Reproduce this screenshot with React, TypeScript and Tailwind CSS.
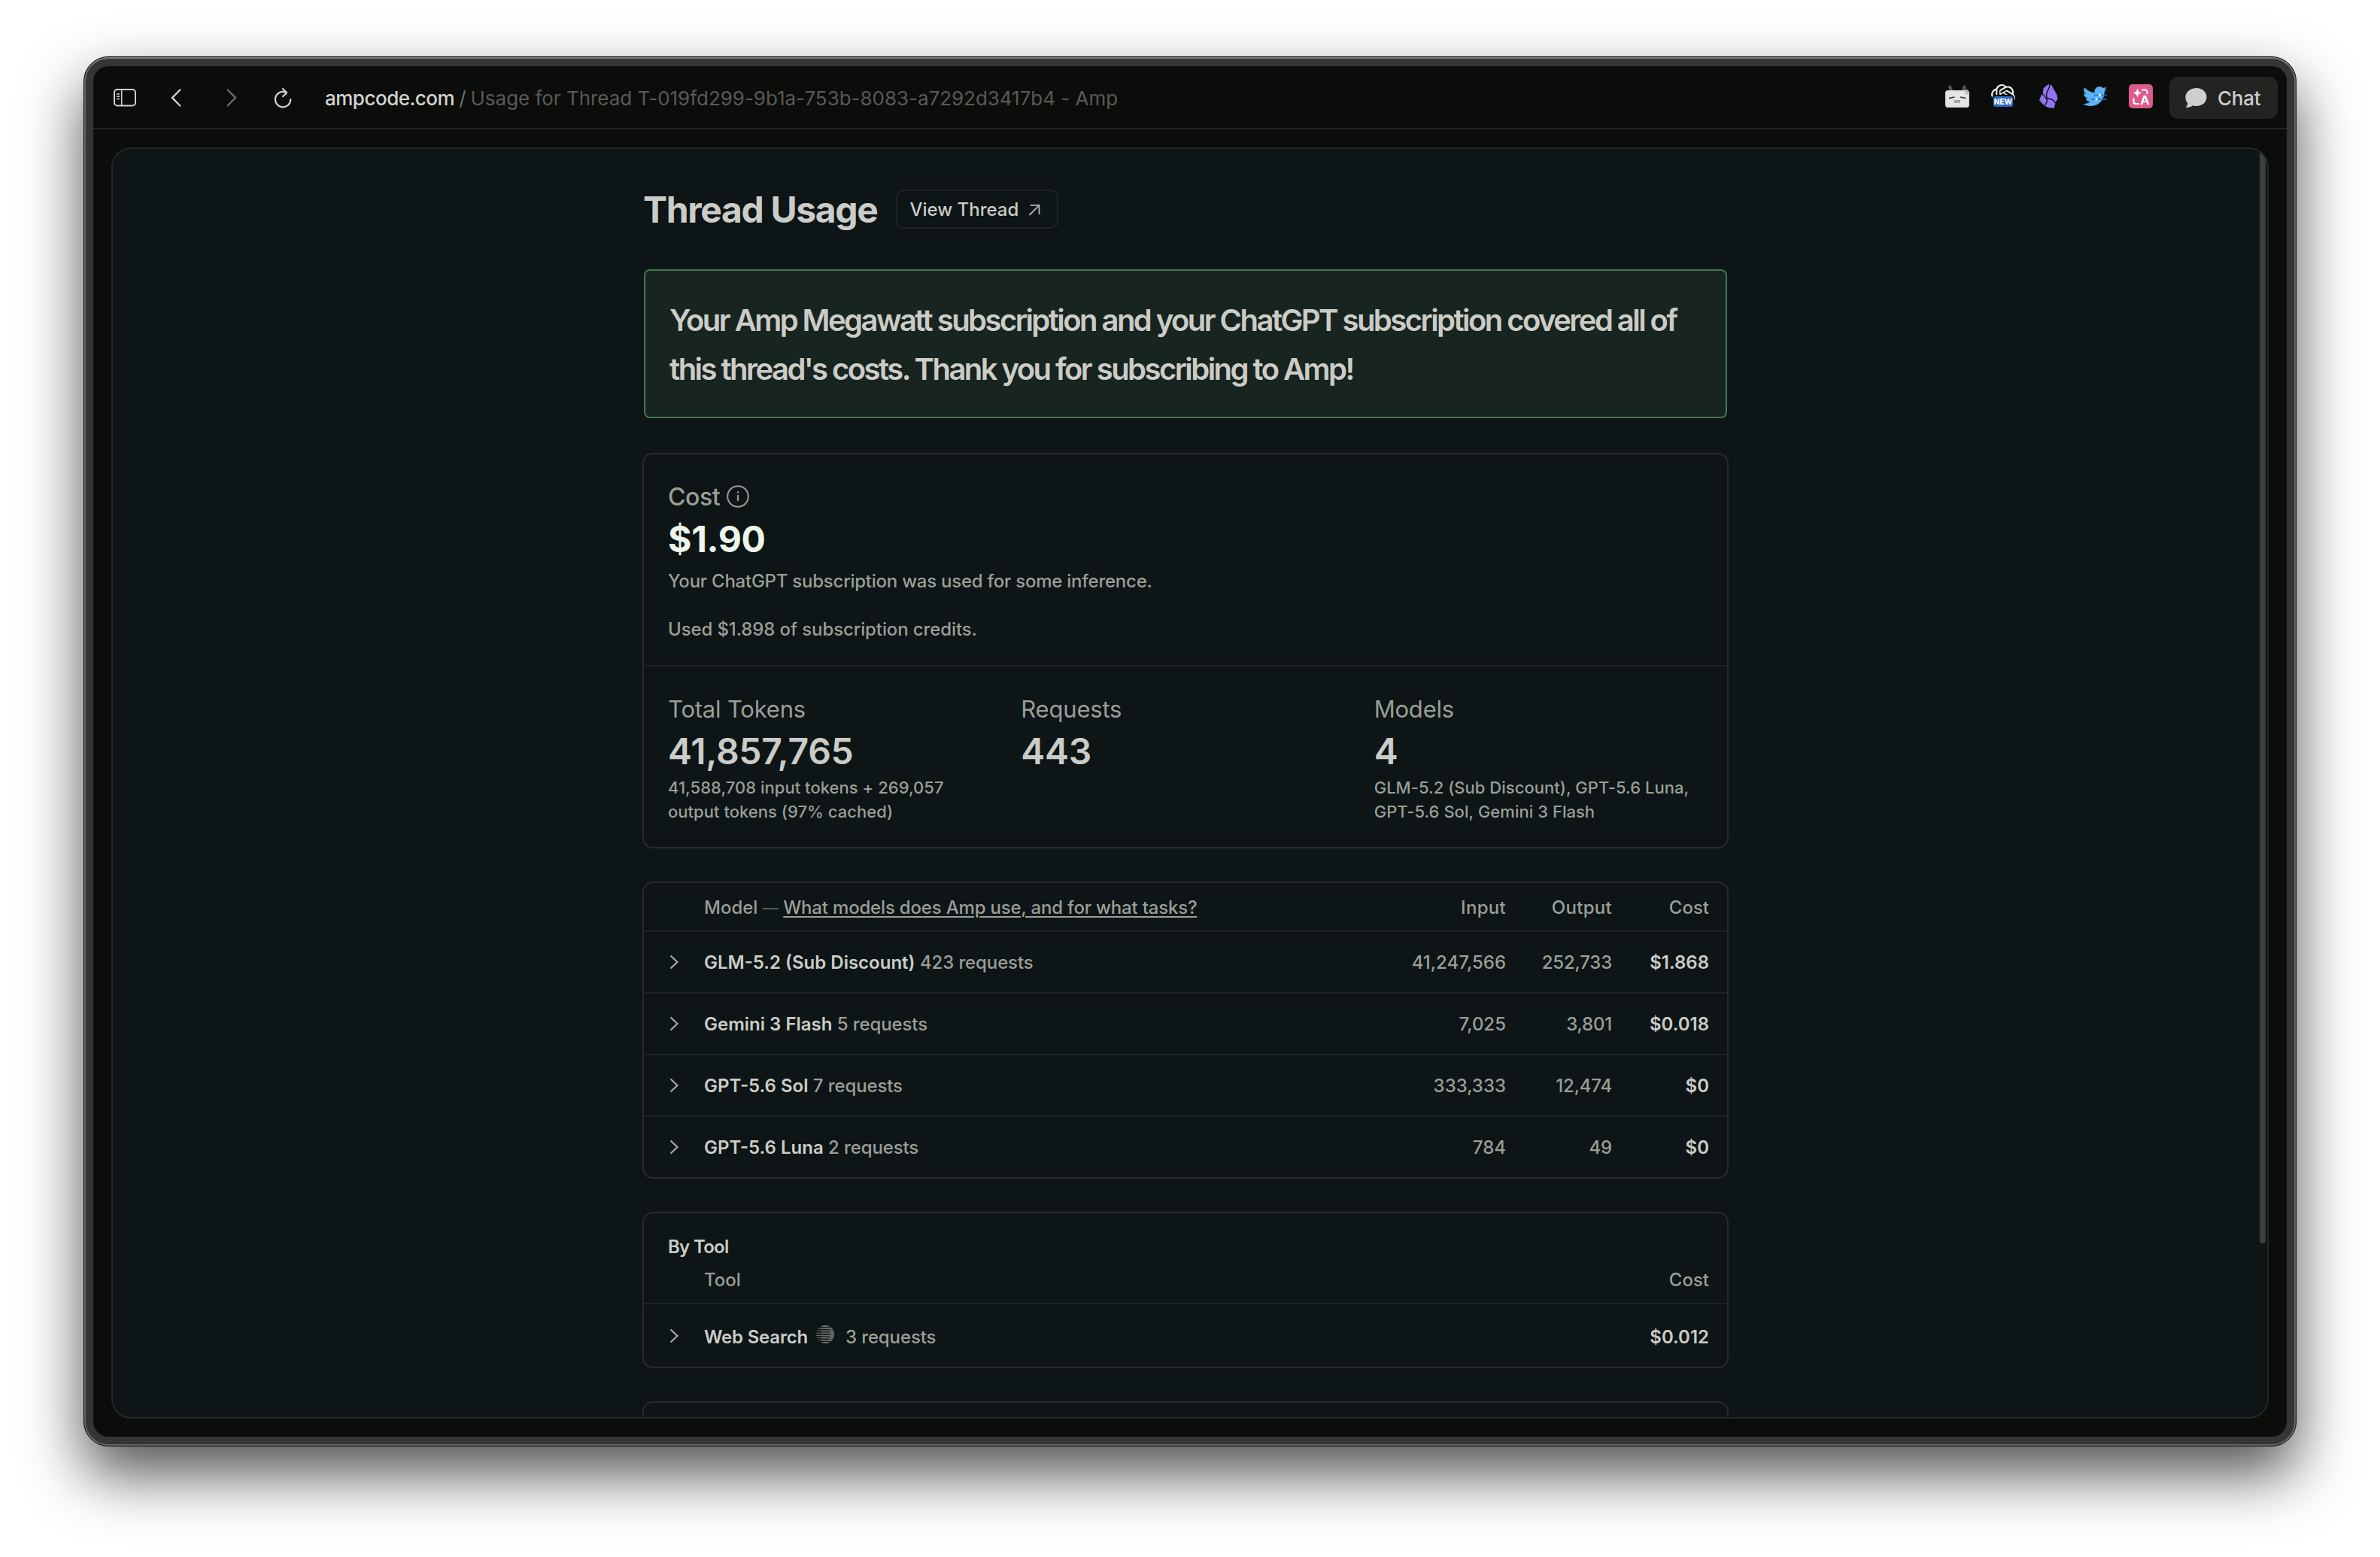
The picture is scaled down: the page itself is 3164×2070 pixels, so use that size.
import type { ReactNode } from 'react'
import { FaTwitter } from 'react-icons/fa'
import { SiOpenai } from 'react-icons/si'

const MODELS = [
  { name: 'GLM-5.2 (Sub Discount)', requests: 423, input: '41,247,566', output: '252,733', cost: '$1.868' },
  { name: 'Gemini 3 Flash', requests: 5, input: '7,025', output: '3,801', cost: '$0.018' },
  { name: 'GPT-5.6 Sol', requests: 7, input: '333,333', output: '12,474', cost: '$0' },
  { name: 'GPT-5.6 Luna', requests: 2, input: '784', output: '49', cost: '$0' },
]

const STATS = [
  { label: 'Total Tokens', value: '41,857,765', lines: ['41,588,708 input tokens + 269,057', 'output tokens (97% cached)'] },
  { label: 'Requests', value: '443', lines: [] },
  { label: 'Models', value: '4', lines: ['GLM-5.2 (Sub Discount), GPT-5.6 Luna,', 'GPT-5.6 Sol, Gemini 3 Flash'] },
]

function SidebarIcon() {
  return (
    <svg className="h-8 w-8" viewBox="0 0 32 32" fill="none" stroke="#d0d1cd" strokeWidth="2" aria-hidden>
      <rect x="2" y="5" width="28" height="21.5" rx="4" />
      <path d="M11.7 5v21.5" strokeWidth="1.6" />
      <path d="M5 11h4M5 14.2h4M5 17.4h4" strokeWidth="1.5" />
    </svg>
  )
}

function BackIcon() {
  return (
    <svg className="h-8 w-8" viewBox="0 0 32 32" fill="none" stroke="#d0d1cd" strokeWidth="2.4" aria-hidden>
      <path d="M21.3 5.5 11 16l10.3 10.5" strokeLinecap="round" />
    </svg>
  )
}

function ForwardIcon() {
  return (
    <svg className="h-8 w-8" viewBox="0 0 32 32" fill="none" stroke="#6c6d6a" strokeWidth="2.4" aria-hidden>
      <path d="M10.7 5.5 21 16 10.7 26.5" strokeLinecap="round" />
    </svg>
  )
}

function ReloadIcon() {
  return (
    <svg className="h-8 w-8" viewBox="0 0 32 32" fill="none" stroke="#d0d1cd" strokeWidth="2.2" aria-hidden>
      <path d="M19.5 8.6A10.2 10.2 0 1 0 26.3 18" strokeLinecap="round" />
      <path d="M16 4l5.2 5.3L16 14.2" strokeLinecap="round" strokeLinejoin="round" />
    </svg>
  )
}

function RobotIcon() {
  return (
    <svg className="h-8 w-8" viewBox="0 0 32 32" aria-hidden>
      <path d="M6.3 3.5 8 8.5M25.7 3.5 24 8.5" stroke="#555654" strokeWidth="4" strokeLinecap="round" />
      <rect x="0" y="8" width="32" height="23" rx="3.5" fill="#d4d4d4" />
      <rect x="1.5" y="9.5" width="29" height="20" rx="2.5" fill="#e6e6e6" />
      <path d="M5 18.6l7.5-1.6M19.8 17l7.5 1.6" stroke="#3a3a3a" strokeWidth="1.6" />
      <rect x="12.3" y="21.3" width="7.4" height="3" fill="#a9a9a9" stroke="#8c8c8c" strokeWidth="0.6" />
      <path d="M28 6c-1.2 2.4-2 3.6-2 5a2.7 2.7 0 0 0 5.4 0C31.4 9.6 29.6 8 28 6z" fill="#bdbdbd" />
    </svg>
  )
}

function ObsidianIcon() {
  return (
    <svg className="h-8 w-8" viewBox="0 0 96 96" aria-hidden>
      <path d="M50 0l9 5 7 14 12 20 5 18-9 16-6 23-22-3-16-7L9 64l9-23 5-3 3-22 16-14z" fill="#9273f0" />
      <path
        d="M50 0c4 16-12 24-12 40l2 20c2 10-4 16-9 26M19 36c6 6 14 12 19 23M38 59c18-4 26 2 37 16"
        fill="none"
        stroke="#0b0d0a"
        strokeWidth="4"
      />
    </svg>
  )
}

function TranslateIcon() {
  return (
    <svg className="h-8 w-8" viewBox="0 0 32 32" aria-hidden>
      <rect width="32" height="32" rx="5" fill="#de5a8e" />
      <path d="M11.5 5c1 4.4 1.8 5.4 6 6.5-4.2 1.1-5 2.1-6 6.5-1-4.4-1.8-5.4-6-6.5 4.2-1.1 5-2.1 6-6.5z" fill="#fff" />
      <path d="M17 7.5h4.5a3 3 0 0 1 3 3V13M6.5 18.5V23a3 3 0 0 0 3 3H14" fill="none" stroke="#fff" strokeWidth="2.1" />
      <text x="21.5" y="27" textAnchor="middle" fontSize="16.5" fontWeight="700" fill="#fff">
        A
      </text>
    </svg>
  )
}

function ChatBubbleIcon() {
  return (
    <svg className="h-7 w-[29px]" viewBox="0 0 29 28" fill="#cececc" aria-hidden>
      <path d="M15 1C22.7 1 28.5 6 28.5 13S22.7 25 15 25c-2 0-3.6-.3-5-.8C8 26 5 27 1.6 27c-.6 0-.7-.6-.3-1 1.5-1.5 2-3.3 1.9-4.7C1.3 19 .4 16.2.4 13 .4 6 7.3 1 15 1z" />
    </svg>
  )
}

function InfoIcon() {
  return (
    <svg className="h-8 w-8" viewBox="0 0 32 32" fill="none" stroke="#9a9f98" strokeWidth="2" aria-hidden>
      <circle cx="16" cy="16" r="13.8" />
      <path d="M16 14v8" strokeWidth="2.2" />
      <circle cx="16" cy="10.5" r="1.3" fill="#9a9f98" stroke="none" />
    </svg>
  )
}

function ArrowUpRightIcon() {
  return (
    <svg className="h-4 w-4" viewBox="0 0 16 16" fill="none" stroke="#b4b7b0" strokeWidth="1.8" aria-hidden>
      <path d="M2.5 1.9h12v12M14.3 2.1 1.4 15" />
    </svg>
  )
}

function ChevronIcon() {
  return (
    <svg className="h-6 w-6" viewBox="0 0 24 24" fill="none" stroke="#a8ada6" strokeWidth="2.1" aria-hidden>
      <path d="M7.5 3.5 16.5 12l-9 8.5" />
    </svg>
  )
}

/** Striped globe shown next to tools that run through a search provider. */
function GlobeStripesIcon() {
  return (
    <svg className="h-6 w-6" viewBox="0 0 24 24" aria-hidden>
      <clipPath id="globe">
        <circle cx="12" cy="12" r="12" />
      </clipPath>
      <g clipPath="url(#globe)" stroke="#7b817c">
        <path d="M0 1h24M0 4.2h24M0 7.3h24M0 10.4h24M0 13.6h24M0 16.7h24M0 19.8h24M0 23h24" strokeWidth="0.9" />
        <path
          d="M8 1h16M7 4.2h17M7 7.3h17M7 10.4h17M7 13.6h17M7 16.7h17M7 19.8h17M8 23h16"
          stroke="#666c68"
          strokeWidth="1.8"
        />
        <path d="M17 4.2h7M18 7.3h6M18.5 10.4h6M18.5 13.6h6M18 16.7h6M17 19.8h7" stroke="#666c68" strokeWidth="2.7" />
      </g>
    </svg>
  )
}

function Toolbar() {
  return (
    <header className="flex h-[84px] shrink-0 items-center border-b-2 border-[#222422] pt-0.5 pr-3 pl-[26px]">
      <SidebarIcon />
      <span className="ml-9">
        <BackIcon />
      </span>
      <span className="ml-[42px]">
        <ForwardIcon />
      </span>
      <span className="ml-9">
        <ReloadIcon />
      </span>
      <div className="ml-10 flex flex-1 pt-0.5 text-[26px] leading-8 whitespace-nowrap">
        <span className="font-medium tracking-[-0.5px] text-[#d2d3cf]">ampcode.com</span>
        <span className="ml-1.5 text-[#70716e]">/</span>
        <span className="ml-1.5 tracking-[-0.03px] text-[#595a57]">
          Usage for Thread T-019fd299-9b1a-753b-8083-a7292d3417b4 - Amp
        </span>
      </div>
      <div className="mr-[22px] flex items-center gap-[29px] pb-1">
        <RobotIcon />
        <span className="relative h-8 w-8">
          <SiOpenai className="h-8 w-8 text-[#f4f4f4]" />
          <span className="absolute top-[14px] left-px flex h-[18px] w-[30px] items-center justify-center rounded-[5px] border-2 border-[#0b0d0a] bg-[#2b66c6] text-[10px] font-extrabold text-white">
            NEW
          </span>
        </span>
        <ObsidianIcon />
        <span className="relative h-8 w-8">
          <FaTwitter className="h-8 w-8 text-[#5cb2f6]" />
          <svg className="absolute inset-0 h-8 w-8" viewBox="0 0 32 32" stroke="#2a6cb8" strokeWidth="1.6" aria-hidden>
            <path d="M15 14.5h17M11 20h21" />
            <circle cx="22.5" cy="14.5" r="1.5" fill="#d9eefc" stroke="#d9eefc" strokeWidth="0.5" />
            <circle cx="18" cy="20" r="1.5" fill="#d9eefc" stroke="#d9eefc" strokeWidth="0.5" />
          </svg>
        </span>
        <TranslateIcon />
      </div>
      <button className="flex h-14 w-36 items-center rounded-[12px] bg-[#222422] pl-[21px] text-[26px] font-medium text-[#cececc]">
        <ChatBubbleIcon />
        <span className="ml-3.5 pt-px tracking-[-0.2px]">Chat</span>
      </button>
    </header>
  )
}

function Card({ children, className = '' }: { children?: ReactNode; className?: string }) {
  return <section className={`-mx-0.5 rounded-[14px] border-2 border-[#272b2d] ${className}`}>{children}</section>
}

function CostSummary() {
  return (
    <Card className="mt-[46px] font-[450]">
      <div className="border-b-2 border-[#1e2325] px-8 pt-[33px] pb-[23px] text-[#9a9f98]">
        <div className="flex h-12 items-center gap-2 text-[32px] font-medium tracking-[-0.4px]">
          Cost
          <span className="-mt-0.5">
            <InfoIcon />
          </span>
        </div>
        <p className="text-[48px] leading-16 font-bold tracking-[-0.3px] text-[#edf4ea]">$1.90</p>
        <p className="text-2xl leading-12 tracking-[-0.24px]">Your ChatGPT subscription was used for some inference.</p>
        <p className="mt-4 text-2xl leading-12 tracking-[-0.11px]">Used $1.898 of subscription credits.</p>
      </div>
      <div className="grid grid-cols-3 gap-8 px-8 pt-[33px] pb-[31px] text-[#9a9f98]">
        {STATS.map((s) => (
          <div key={s.label}>
            <p className="text-[31px] leading-12 font-normal tracking-[-0.2px]">{s.label}</p>
            <p className="text-[48px] leading-16 font-semibold tracking-[-0.3px] text-[#cbccc7]">{s.value}</p>
            {s.lines.map((line) => (
              <p key={line} className="text-[22px] leading-8 tracking-[0.03px] whitespace-nowrap">
                {line}
              </p>
            ))}
          </div>
        ))}
      </div>
    </Card>
  )
}

function ModelTable() {
  return (
    <Card className="mt-11 text-2xl font-[450] text-[#9a9f98]">
      <div className="grid h-[63px] grid-cols-[80px_1fr_178px_141px_129px] items-center pt-0.5 pr-6 font-medium">
        <span />
        <span className="whitespace-nowrap">
          Model <span className="text-[21px] font-normal text-[#5b605c]">—</span>{' '}
          <a className="font-[450] tracking-[-0.18px] underline decoration-2 underline-offset-[3px]">
            What models does Amp use, and for what tasks?
          </a>
        </span>
        <span className="text-right tracking-[0.3px]">Input</span>
        <span className="text-right tracking-[0.3px]">Output</span>
        <span className="text-right">Cost</span>
      </div>
      {MODELS.map((m) => (
        <div
          key={m.name}
          className="grid h-[82px] grid-cols-[80px_1fr_178px_141px_129px] items-center border-t-2 border-[#1e2325] pr-6"
        >
          <span className="pl-7">
            <ChevronIcon />
          </span>
          <span className="pt-px">
            <span className="font-semibold text-[#cbccc7]">{m.name}</span>{' '}
            <span className="tracking-[-0.12px]">{m.requests} requests</span>
          </span>
          <span className="pt-px text-right">{m.input}</span>
          <span className="pt-px text-right tracking-[-0.2px]">{m.output}</span>
          <span className="pt-px text-right font-semibold text-[#cbccc7]">{m.cost}</span>
        </div>
      ))}
    </Card>
  )
}

function ToolTable() {
  return (
    <Card className="mt-11 text-2xl font-[450] text-[#9a9f98]">
      <h2 className="px-8 pt-[29px] leading-8 font-semibold tracking-[-0.7px] text-[#cbccc7]">By Tool</h2>
      <div className="flex justify-between pt-3 pr-6 pb-[14px] pl-20 leading-8 font-medium">
        <span>Tool</span>
        <span>Cost</span>
      </div>
      <div className="flex h-[85px] items-center border-t-2 border-[#1e2325] pr-6">
        <span className="w-20 pl-7">
          <ChevronIcon />
        </span>
        <span className="pt-1 font-semibold tracking-[-0.2px] text-[#cbccc7]">Web Search</span>
        <span className="ml-[11px] -mt-[3px]">
          <GlobeStripesIcon />
        </span>
        <span className="ml-[15px] flex-1 pt-1 tracking-[-0.12px]">3 requests</span>
        <span className="pt-1 font-semibold text-[#cbccc7]">$0.012</span>
      </div>
    </Card>
  )
}

export default function App() {
  return (
    <div className="h-[2070px] w-[3164px] overflow-hidden bg-white pt-[75px] pl-[111px] font-['Inter',sans-serif]">
      <div className="h-[1848px] w-[2942px] rounded-[33px] border border-black bg-[#353535] shadow-[0_37px_80px_rgba(0,0,0,0.68)]">
        <div className="h-full rounded-[32px] border-2 border-[#656565] border-t-[#7c7c7c] p-2.5">
          <div className="flex h-full flex-col rounded-[20px] bg-[#0b0d0a] pb-6">
            <Toolbar />
            <main className="mx-6 mt-6 flex min-h-0 flex-1 overflow-hidden rounded-[26px] border-2 border-[#242725] bg-[#0d1516]">
              <div className="flex-1">
                <div className="mx-auto w-[1440px] pt-[54px]">
                  <div className="flex h-[52px] items-center gap-[25px]">
                    <h1 className="-ml-px pt-0.5 text-[48px] font-bold tracking-[-1.35px] text-[#cbccc7]">Thread Usage</h1>
                    <button className="flex h-[52px] items-center gap-[13px] rounded-[10px] border-2 border-[#1e2325] pt-px pr-[22px] pl-4 text-2xl font-medium text-[#cbccc7]">
                      View Thread
                      <ArrowUpRightIcon />
                    </button>
                  </div>
                  <div className="mt-[54px] rounded-[8px] border-2 border-[#46744f] bg-[#18241f] px-8 pt-[33px] pb-[31px] text-[40px] leading-[65px] font-[575] tracking-[-2.55px] whitespace-nowrap text-[#cbccc7]">
                    <p>Your Amp Megawatt subscription and your ChatGPT subscription covered all of</p>
                    <p>this thread's costs. Thank you for subscribing to Amp!</p>
                  </div>
                  <CostSummary />
                  <ModelTable />
                  <ToolTable />
                  <Card className="mt-11 h-40" />
                </div>
              </div>
              <div className="w-3 px-0.5 pt-0.5">
                <div className="h-[1453px] rounded-full bg-[#39403d]" />
              </div>
            </main>
          </div>
        </div>
      </div>
    </div>
  )
}
